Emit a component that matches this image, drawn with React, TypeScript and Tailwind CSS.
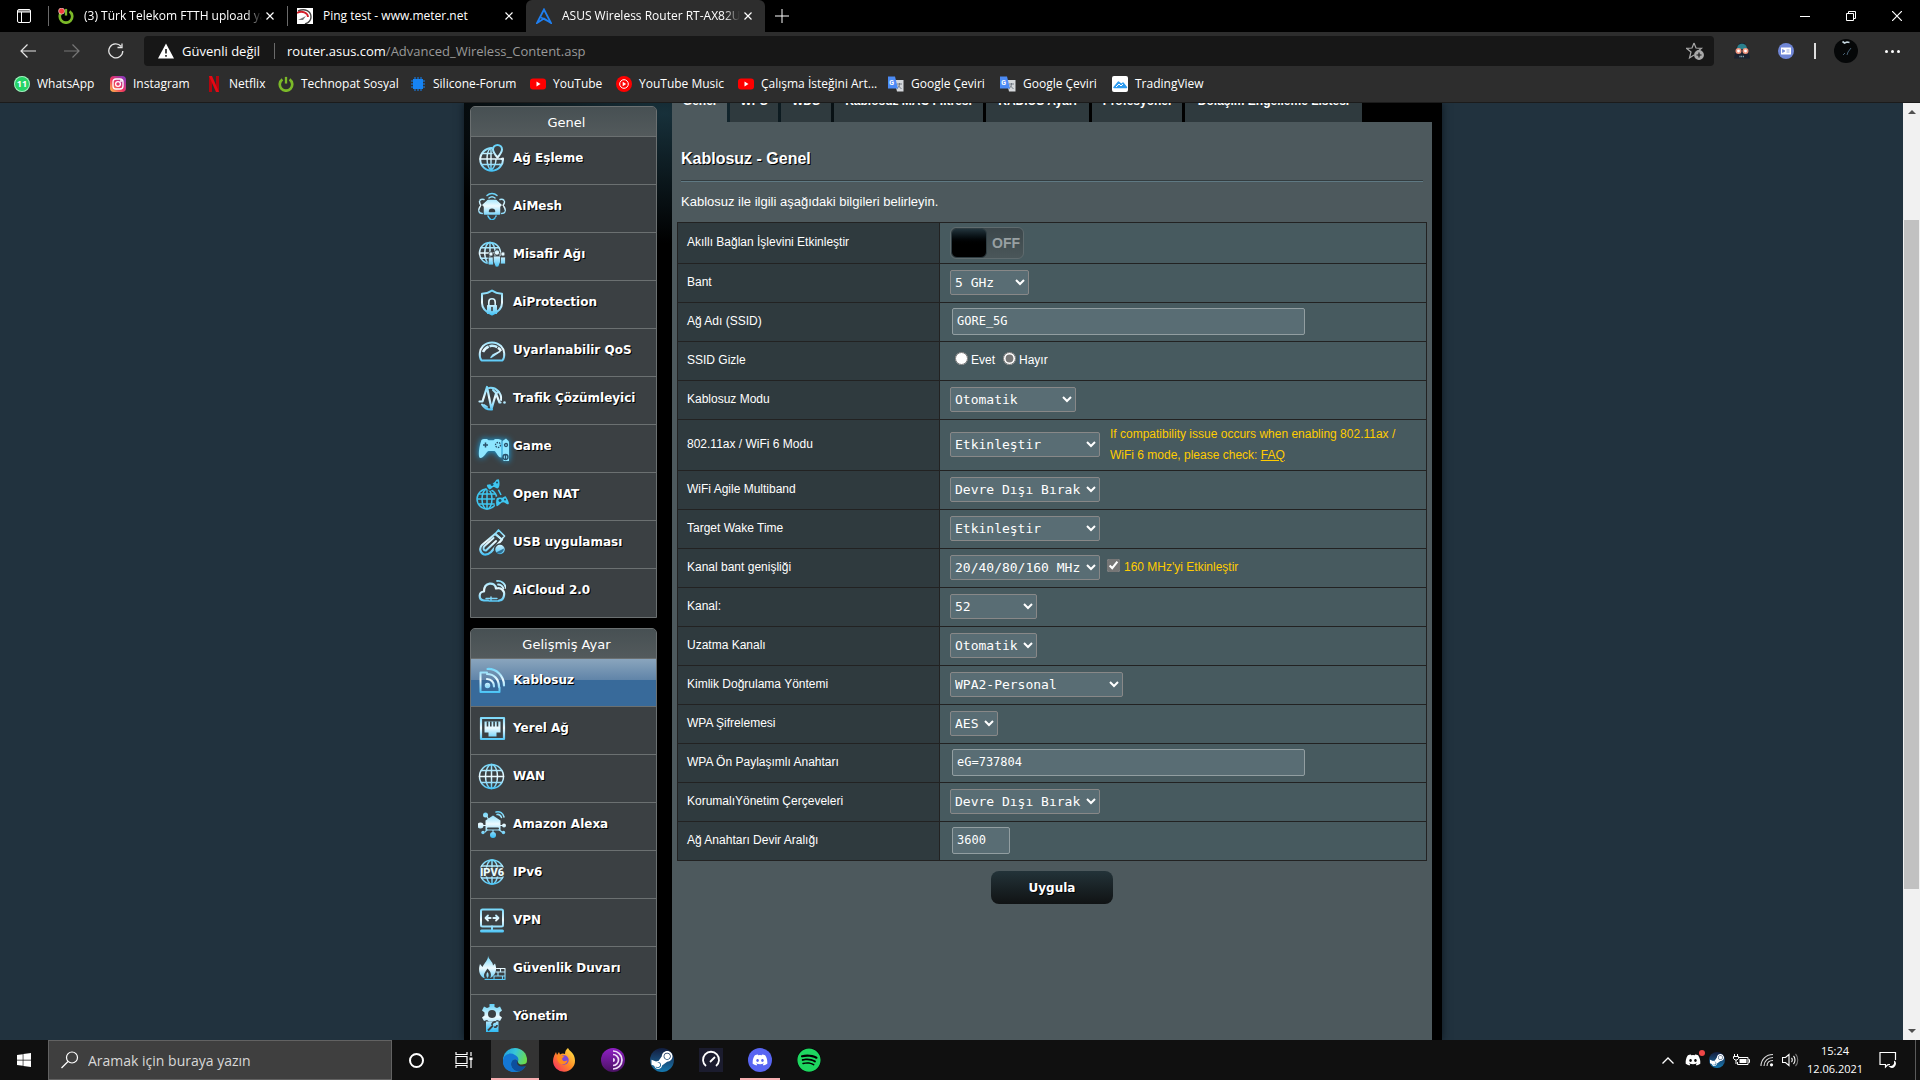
import React from "react";
import { FaDiscord, FaSpotify, FaSteamSymbol, FaWindows } from "react-icons/fa";

const UI = "font-['Open_Sans','Noto_Sans',sans-serif]";
const ICE = "url(#ice)";

/* ---------- sidebar icons (28 x 28 grid) ---------- */

function Ico({ children }: { children: React.ReactNode }) {
  return (
    <svg viewBox="0 0 28 28" className="size-7 shrink-0" fill="none" stroke={ICE} strokeWidth="1.5" strokeLinecap="round" strokeLinejoin="round" aria-hidden="true">
      {children}
    </svg>
  );
}

const Globe = ({ cx = 14, cy = 14, r = 12 }: { cx?: number; cy?: number; r?: number }) => (
  <g>
    <circle cx={cx} cy={cy} r={r} />
    <ellipse cx={cx} cy={cy} rx={r * 0.5} ry={r} />
    <path d={`M${cx} ${cy - r}v${2 * r}M${cx - r} ${cy + 0.01}h${2 * r}M${cx - r * 0.86} ${cy - r * 0.5}h${r * 1.72}M${cx - r * 0.86} ${cy + r * 0.51}h${r * 1.72}`} />
  </g>
);

const MapIcon = () => (
  <Ico>
    <path d="M14 4A11.400 11.400 0 1 0 25 14.500" strokeWidth="2" />
    <path d="M12 4.500C8 9 8 21 12.500 26M13 4v22M18 15c0 5-1.500 8-4.500 11M2 15h21M4 9.500h10M4 20.500h18" strokeWidth="1.400" />
    <path d="M19.500 13.500c-3-3.500-4.500-5.500-4.500-8a4.500 4.500 0 0 1 9 0c0 2.500-1.500 4.500-4.500 8z" strokeWidth="2" fill="#3b4043" />
    <circle cx="22" cy="20.500" r="1.100" fill={ICE} stroke="none" />
    <circle cx="24" cy="15" r="1.300" fill={ICE} stroke="none" />
  </Ico>
);
const MeshIcon = () => (
  <Ico>
    <path d="M9 3.500a7 7 0 0 1 10 0M11 6a4.500 4.500 0 0 1 6 0" />
    <path d="M10 8.500h8l5 4.500-1.500 1.500V22h-15v-7.500L5 13z" fill={ICE} />
    <path d="M11.500 19.500a2.500 2.300 0 0 1 5 0z" fill="#3b4043" stroke="#3b4043" />
    <path d="M6 7.500C1 6.500 .500 10 3 13.500c-3 3-3.500 8 1.500 8M22 7.500c5-1 5.500 3 3 6 3 3 3.500 8-1.500 8M10 24c2 5 6 5 8 0" strokeDasharray="4 1.500" />
  </Ico>
);
const GuestIcon = () => (
  <Ico>
    <Globe cx={12} cy={13} r={10.500} />
    <g fill={ICE} stroke="#3b4043" strokeWidth="0.800">
      <circle cx="13" cy="14" r="2.200" /><circle cx="25" cy="14" r="2.200" />
      <path d="M10.500 17h5v8h-5zM22.500 17h5v7h-5z" />
      <circle cx="19" cy="12.500" r="2.700" /><path d="M15.500 16h7v6l-2 5h-3l-2-5z" />
    </g>
  </Ico>
);
const ShieldIcon = () => (
  <Ico>
    <path d="M14 2.500c3 2.300 6 3 10 3.200V15c0 5.500-3.500 9-10 11.500C7.500 24 4 20.500 4 15V5.700c4-.200 7-.900 10-3.200z" strokeWidth="2" />
    <path d="M10.800 17v-3a3.200 3.200 0 0 1 6.400 0v3" strokeWidth="1.600" />
    <rect x="9" y="17" width="10" height="9" rx=".500" fill={ICE} stroke="none" />
    <path d="M14 19.500v3" stroke="#3b4043" strokeWidth="1.600" />
  </Ico>
);
const GaugeIcon = () => (
  <Ico>
    <path d="M3.500 24.500c-3-4-2-11 1.500-14.500a13 13 0 0 1 18 0c3.500 3.500 4.500 10.500 1.500 14.500z" strokeWidth="2" />
    <path d="M5 16a10 10 0 0 1 18-1" strokeWidth="2.500" strokeDasharray="8 .800" strokeLinecap="butt" />
    <path d="M13 21.500l9-6-7 3.500z" fill={ICE} />
  </Ico>
);
const TrafficIcon = () => (
  <Ico>
    <path d="M11 4a10.500 10.500 0 0 1 12 12M4 20.500a10.500 10.500 0 0 0 10 5" strokeWidth="2" />
    <path d="M1.500 17.500h3L9 3l4.500 22L18 9.500l3.500 9h1" strokeWidth="2.200" />
    <path d="M15 6l3 3 3-1M6 21l3 2" strokeWidth="2" />
    <circle cx="26.500" cy="18.500" r="1.300" fill={ICE} stroke="none" />
  </Ico>
);
const GameIcon = () => (
  <svg viewBox="0 0 32 28" className="mt-2 h-7 w-8 shrink-0 drop-shadow-[0_0_3px_#16a5e8]" aria-hidden="true">
    <path d="M3 5.500Q3 3 6 3h3l1.500 1.200h5L17 3h3.500l3 1v17.500c-3 1-5-5.500-7-6.500h-6C8 16 6 22 2.500 22-.500 22 1 11 3 5.500z" fill="#8de6ff" />
    <path d="M24.500 5 28 2.500 31 5.500V25h-5.500l-1-5z" fill="#8de6ff" />
    <g stroke="#29506a" strokeWidth="1.500"><path d="M5 9h5M7.500 6.500v5" /></g>
    <g fill="none" stroke="#29506a" strokeWidth="1.300">
      <circle cx="20" cy="9" r="2.500" strokeDasharray="1.500 1" /><circle cx="28" cy="9" r="1.500" /><circle cx="27.500" cy="21" r="2.500" /><path d="M27.500 18.500v5" />
    </g>
  </svg>
);
const NatIcon = () => (
  <svg viewBox="0 0 34 34" className="-ml-0.5 size-[34px] shrink-0" fill="none" stroke="#3fc6f0" strokeWidth="1.500" aria-hidden="true">
    <circle cx="11" cy="22" r="10" /><ellipse cx="11" cy="22" rx="5" ry="10" /><path d="M11 12v20M1 22h20M2.500 17h17M2.500 27h17" />
    <path d="M22 12l3 6" />
    <path d="M11 7c4 0 7-1 9-5 2-1 4-1 4 2 1 5-1 9-3 8-2 0-2-2-4-1-2 2-4 3-5 1-1-1-3-4-1-5zM20 21c2-2 4-1 6-1 2-1 4-3 5 0 2 3 4 8 1 8-2 0-3-2-5-2s-4 4-6 4-2-6-1-9z" fill="#3fc6f0" stroke="#3b4043" />
    <path d="M16 6v3M14.500 7.500h3M24 22v3M22.500 23.500h3" stroke="#1e4a5c" />
    <circle cx="21" cy="5.500" r="1" fill="#1e4a5c" stroke="none" /><circle cx="29" cy="22.500" r="1" fill="#1e4a5c" stroke="none" />
  </svg>
);
const UsbIcon = () => (
  <Ico>
    <path d="M17 6 4 17c-3 3-2 8 2 9.500 3 .500 5-.500 7-2.500L24 11.500z" strokeWidth="2.200" />
    <path d="M15.500 10 6.500 18c-2 2-1 5 1.500 4.500L18 13" strokeWidth="2" />
    <path d="M17.500 5.500l3-3.500 6 6-3 3.500z" strokeWidth="1.700" />
    <circle cx="22" cy="21.500" r="5.500" fill={ICE} stroke="#3b4043" /><path d="M18 24.500a5 5 0 0 0 8-4z" fill="#2f6f93" stroke="none" />
  </Ico>
);
const CloudIcon = () => (
  <Ico>
    <path d="M10 24.500H6c-6-.500-5.500-9 0-9C6 6 17 5 18 12.500c5-1.500 9 2 8 7-.500 3-2 5-5 5" strokeWidth="2.200" />
    <path d="M8 22.500h11M11 25h10M13 21v3" strokeWidth="1.400" />
    <path d="M19 5c4-.500 8 2 9 7M20 8.500c2.500 0 4.500 1.500 5.500 4" strokeWidth="1.800" />
  </Ico>
);
const WirelessIcon = () => (
  <Ico>
    <path d="M9 6.500H2.500v19.500h19V21.500" strokeWidth="2" />
    <circle cx="9.500" cy="19.500" r="2" fill={ICE} />
    <path d="M9 13a7 7 0 0 1 7 7.500M9 8c7 0 12 5 12 13M9.500 3C18 2.500 26 9.500 26 19.500" strokeWidth="2.200" />
  </Ico>
);
const LanIcon = () => (
  <Ico>
    <path d="M3 4h23v21H3z" strokeWidth="2.200" />
    <path d="M6.500 7.500h16v11h-4v4h-8v-4h-4z" fill={ICE} stroke="none" />
    <path d="M9.500 7.500v5M12.800 7.500v5M16.100 7.500v5M19.500 7.500v5" stroke="#3b4043" strokeLinecap="butt" strokeWidth="1.600" />
  </Ico>
);
const WanIcon = () => <Ico><Globe cx={13.500} cy={14.500} r={12} /></Ico>;
const AlexaIcon = () => (
  <Ico>
    <g transform="translate(1 0)">
      <path d="M2 15.500h23M6 22l4-4M14 24v-5M23 22l-4-3M7 5l3 5" strokeWidth="1.200" />
      <path d="M14 5.500l7.500 5V20.500h-15v-10z" fill={ICE} stroke="none" />
      <path d="M9 18.500h10" stroke="#3b4043" strokeWidth="2" />
      <circle cx="1.500" cy="15.500" r="3" fill={ICE} stroke="none" /><circle cx="25" cy="15.500" r="2" fill={ICE} stroke="none" />
      <circle cx="14" cy="25" r="3" fill={ICE} stroke="none" /><circle cx="6.500" cy="5" r="2.500" fill={ICE} stroke="none" />
      <circle cx="4" cy="22.500" r="1.700" fill={ICE} stroke="none" /><circle cx="24.500" cy="22.500" r="1.700" fill={ICE} stroke="none" />
      <path d="M17 2c4-1 7 1 8 5M18 4.500c2-.500 3.500.500 4.500 3" />
    </g>
  </Ico>
);
const Ipv6Icon = () => (
  <Ico>
    <Globe />
    <path d="M0 9.500h28v9H0z" fill="#3b4043" stroke="none" />
    <text x="14" y="18" textAnchor="middle" fontSize="11" fontWeight="900" fontFamily="Roboto, sans-serif" fill="#e8fbff" stroke="none">IPV6</text>
  </Ico>
);
const VpnIcon = () => (
  <Ico>
    <rect x="3" y="3.500" width="22" height="17" rx="1.500" strokeWidth="2" />
    <path d="M3.500 25h21" strokeWidth="3" /><path d="M14 20.500v4" strokeWidth="2" />
    <path d="M8 12h4.500M15.500 12H20" strokeWidth="2.200" /><path d="M10 9.500L7.500 12l2.500 2.500M18 9.500l2.500 2.500-2.500 2.500" strokeWidth="1.800" />
  </Ico>
);
const FireIcon = () => (
  <Ico>
    <path d="M10 1.500c.500 4 5 6 5 10l2-2c2 5 1 9-1 11.500-3 4.500-11 5-13.500 0C0 16 1.500 12 2 10l2.500 3C6 9 10.500 6 10 1.500z" fill={ICE} stroke="none" />
    <path d="M9.500 14.500c4 4 4 6.500 2.500 10h-5c-2-3.500-1-5 2.500-10z" fill="#3b4043" stroke="none" />
    <path d="M9.500 18c1.500 2 1.500 4.500 0 6-1.500-1.500-1.500-4 0-6z" fill={ICE} stroke="none" />
    <path d="M18.500 14.500H27v11H7M18 18h9M16.500 22H27M22.500 14.500V18M20 18v4M24.500 22v3.500M16 22v3.500" strokeWidth="1.100" />
  </Ico>
);
const AdminIcon = () => (
  <svg viewBox="0 0 28 30" className="mt-1 h-[30px] w-7 shrink-0" aria-hidden="true">
    <path d="M11.500 1h5v3l2.500 1 3-1.500 2 4-2.500 2v3l2.500 2-2 3.500-3-1-2 1.500h-6L9 17l-3 1-2-3.500 2.500-2v-3L4 7.500l2-4L9 5l2.500-1z" fill={ICE} />
    <circle cx="14" cy="11" r="4" fill="#3b4043" />
    <path d="M8 18.500h12.500V29H8z" fill={ICE} />
    <path d="M10 27.500l5-5M14 22a3 3 0 0 1 4-3M16 24c2 .500 3-.500 3-2" stroke="#3b4043" strokeWidth="1.800" fill="none" />
  </svg>
);

/* ---------- browser chrome ---------- */

const PowerLogo = ({ dot }: { dot?: boolean }) => (
  <svg viewBox="0 0 18 18" className="size-4 shrink-0" aria-hidden="true">
    <path d="M5 3.800a7 7 0 1 0 8 0" fill="none" stroke="#7bb928" strokeWidth="3" />
    <path d="M9 1v7.500" stroke="#7bb928" strokeWidth="2.600" />
    {dot && <circle cx="4" cy="3.500" r="3.400" fill="#f13b3b" stroke="#fff" strokeWidth=".600" />}
  </svg>
);
const CloseX = ({ label }: { label: string }) => (
  <button aria-label={label} className="flex size-4 shrink-0 items-center justify-center">
    <svg viewBox="0 0 8 8" className="size-2" stroke="#fff" strokeWidth="1.200" aria-hidden="true"><path d="M.500.500l7 7M7.500.500l-7 7" /></svg>
  </button>
);

function TabStrip() {
  return (
    <div className={`flex h-8 shrink-0 items-center bg-black text-[12px] leading-4 text-white ${UI}`}>
      <button aria-label="Sekme eylemleri" className="flex w-12 justify-center">
        <svg viewBox="0 0 14 14" className="size-3.5" fill="none" stroke="#fff" aria-hidden="true"><rect x=".500" y=".500" width="13" height="13" rx="1.500" /><path d="M1 2h12M1 3h12M4.500 3v10" /></svg>
      </button>
      <div className="flex h-8 w-[239px] items-center">
        <span className="mr-[9px] h-5 w-px bg-[#6a6a6a]" />
        <PowerLogo dot />
        <span className="ml-2.5 w-[178px] overflow-hidden whitespace-nowrap [mask-image:linear-gradient(to_right,#000_162px,transparent)]">(3) Türk Telekom FTTH upload yavaş</span>
        <CloseX label="Sekmeyi kapat" />
      </div>
      <div className="flex h-8 w-[239px] items-center">
        <span className="mr-[9px] h-5 w-px bg-[#6a6a6a]" />
        <svg viewBox="0 0 16 16" className="size-4 shrink-0" aria-hidden="true"><path d="M0 0h16v16H0z" fill="#fff" /><path d="M1 3c7-3 13 0 13 6 0 4-3 6-6 7" fill="none" stroke="#444" strokeWidth="1.400" /><path d="M0 5c5-3 11 0 11 4" fill="none" stroke="#d3202a" strokeWidth="1.800" /><path d="M1 12l8-4-3 4z" fill="#777" /></svg>
        <span className="ml-2.5 w-[178px] overflow-hidden whitespace-nowrap">Ping test - www.meter.net</span>
        <CloseX label="Sekmeyi kapat" />
      </div>
      <div className="flex h-8 w-[239px] items-center rounded-t-md bg-[#2d2d2d] pl-2.5">
        <svg viewBox="0 0 16 16" className="size-4 shrink-0" fill="none" stroke="#1f7ff0" strokeWidth="1.800" aria-hidden="true"><path d="M8 1.500 1 15l7-4.500L15 15z M5 9.500l9.500 5" /></svg>
        <span className="ml-2.5 w-[178px] overflow-hidden whitespace-nowrap [mask-image:linear-gradient(to_right,#000_162px,transparent)]">ASUS Wireless Router RT-AX82U - Genel</span>
        <CloseX label="Sekmeyi kapat" />
      </div>
      <button aria-label="Yeni sekme" className="ml-2.5">
        <svg viewBox="0 0 14 14" className="size-3.5" stroke="#fff" aria-hidden="true"><path d="M7 0v14M0 7h14" /></svg>
      </button>
      <div className="ml-auto flex h-7 items-center">
        <button aria-label="Simge durumuna küçült" className="flex w-[46px] justify-center"><svg viewBox="0 0 10 10" className="size-2.5" stroke="#fff" aria-hidden="true"><path d="M0 5.500h10" /></svg></button>
        <button aria-label="Önceki boyut" className="flex w-[46px] justify-center"><svg viewBox="0 0 10 10" className="size-2.5" fill="none" stroke="#fff" aria-hidden="true"><path d="M.500 2.500h7v7h-7zM2.500 2V.500h7v7H8" /></svg></button>
        <button aria-label="Kapat" className="flex w-[46px] justify-center"><svg viewBox="0 0 10 10" className="size-2.5" stroke="#fff" strokeWidth="1.200" aria-hidden="true"><path d="M0 0l10 10M10 0 0 10" /></svg></button>
      </div>
    </div>
  );
}

function Toolbar() {
  return (
    <div className={`flex h-[38px] shrink-0 items-center bg-[#2d2d2d] pl-5 text-[13px] leading-5 text-white ${UI}`}>
      <button aria-label="Geri" className="w-11"><svg viewBox="0 0 16 16" className="size-4" fill="none" stroke="#e4e4e4" strokeWidth="1.200" aria-hidden="true"><path d="M16 8H1M7.500 1.500 1 8l6.500 6.500" /></svg></button>
      <button aria-label="İleri" className="w-11"><svg viewBox="0 0 16 16" className="size-4" fill="none" stroke="#777" strokeWidth="1.200" aria-hidden="true"><path d="M0 8h15M8.500 1.500 15 8l-6.500 6.500" /></svg></button>
      <button aria-label="Yenile" className="w-9"><svg viewBox="0 0 16 16" className="size-4" fill="none" stroke="#e4e4e4" strokeWidth="1.300" aria-hidden="true"><path d="M14.800 8A7 7 0 1 1 13 3.200M14 .500v4H9.500" /></svg></button>
      <div className="flex h-[30px] flex-1 items-center rounded bg-[#171717] pl-3.5 pr-2.5">
        <svg viewBox="0 0 16 16" className="size-4" aria-hidden="true"><path d="M8 .500 16 15.500H0z" fill="#fff" /><path d="M8 6v4.500M8 12v1.700" stroke="#171717" strokeWidth="1.600" /></svg>
        <span className="ml-2 w-[92px] whitespace-nowrap">Güvenli değil</span>
        <span className="h-4 w-px bg-[#6a6a6a]" />
        <span className="ml-3 whitespace-nowrap text-[#999]"><span className="text-white">router.asus.com</span>/Advanced_Wireless_Content.asp</span>
        <button aria-label="Sık kullanılanlara ekle" className="ml-auto"><svg viewBox="0 0 18 18" className="size-[18px]" fill="none" stroke="#aaa" strokeWidth="1.200" aria-hidden="true"><path d="M8 1l2 5 5.500.300-4.300 3.500M8 1 6 6l-5.500.300L5 10l-1.500 6 4.500-3" /><circle cx="13" cy="13" r="4.300" fill="#aaa" /><path d="M13 10.500v5M10.500 13h5" stroke="#171717" /></svg></button>
      </div>
      <div className="ml-5 flex items-center">
        <svg viewBox="0 0 16 16" className="size-4" aria-hidden="true"><path d="M0 15.500 2 5l3-3V0h6v2l3 3 2 10.500z" fill="#1b2230" /><path d="M3 6c0-7 10-7 10 0z" fill="#2b7f8c" /><circle cx="4.500" cy="8" r="3" fill="#f0937c" /><circle cx="11.500" cy="8" r="3" fill="#f0937c" /><circle cx="4.500" cy="8" r="1.400" fill="#fff" /><circle cx="11.500" cy="8" r="1.400" fill="#fff" /><path d="M5.500 13.500h5" stroke="#8fb3bd" strokeWidth="1.500" strokeDasharray="1 .700" /></svg>
        <svg viewBox="0 0 16 16" className="ml-7 size-4" aria-hidden="true"><circle cx="8" cy="8" r="8" fill="#6f86d6" /><path d="M3 4.500h10v7H3z" fill="#fff" /><path d="M4.500 6.500v3l2.500-1.500zM8.500 7h3M8.500 9h3" fill="#6f86d6" stroke="#6f86d6" strokeWidth=".700" /></svg>
        <span className="ml-5 h-4 w-0.5 bg-[#ddd]" />
        <svg viewBox="0 0 24 24" className="ml-[18px] size-6" aria-hidden="true"><circle cx="12" cy="12" r="12" fill="#050708" /><path d="M8.500 2.500l2 1.500 2.500-1 2.500.500" stroke="#c4d5de" strokeWidth="1.600" fill="none" /><path d="M17 9l-3 4M11 14l-2 2M14 13l-1 3" stroke="#4d6a80" strokeWidth=".900" fill="none" /></svg>
        <button aria-label="Ayarlar ve diğer" className="ml-[27px] mr-5 flex gap-[3px]"><i className="size-[3px] rounded-full bg-white" /><i className="size-[3px] rounded-full bg-white" /><i className="size-[3px] rounded-full bg-white" /></button>
      </div>
    </div>
  );
}

const Yt = () => <svg viewBox="0 0 16 16" className="size-4" aria-hidden="true"><rect y="2.500" width="16" height="11" rx="3" fill="#f00" /><path d="M6.500 5.500v5l4-2.500z" fill="#fff" /></svg>;
const GTranslate = () => (
  <svg viewBox="0 0 16 16" className="size-4" aria-hidden="true"><path d="M6 4h9.500v11.500H9z" fill="#d5d8dc" /><path d="M9 8h5M11.500 7v1c0 2-1 3.500-2.500 4.500M10 9.500l3.500 3.500" stroke="#69727c" strokeWidth=".900" fill="none" /><path d="M0 .500h7l3 12H0z" fill="#4c8bf5" /><text x="1.300" y="8.500" fontSize="7" fontWeight="700" fill="#fff" fontFamily="Roboto, sans-serif">G</text></svg>
);

const bookmarks: { w: string; label: string; icon: React.ReactNode }[] = [
  { w: "w-24", label: "WhatsApp", icon: <span className="flex size-4 items-center justify-center rounded-full bg-[#25d366] text-[9px] font-bold leading-4 text-white ring-1 ring-inset ring-white/60">11</span> },
  { w: "w-24", label: "Instagram", icon: <svg viewBox="0 0 16 16" className="size-4" fill="none" stroke="#fff" strokeWidth="1.300" aria-hidden="true"><rect width="16" height="16" rx="4" fill="url(#insta)" stroke="none" /><rect x="3" y="3" width="10" height="10" rx="3" /><circle cx="8" cy="8" r="2.400" /><circle cx="11" cy="5" r=".400" /></svg> },
  { w: "w-[72px]", label: "Netflix", icon: <svg viewBox="0 0 10 16" className="h-4 w-3.5" aria-hidden="true"><path d="M0 0h3v16H0zM7 0h3v16H7z" fill="#b1060f" /><path d="M0 0h3l7 16H7z" fill="#e50914" /></svg> },
  { w: "w-[132px]", label: "Technopat Sosyal", icon: <PowerLogo /> },
  { w: "w-[120px]", label: "Silicone-Forum", icon: <svg viewBox="0 0 16 16" className="size-4" aria-hidden="true"><rect x="3" y="3" width="10" height="10" fill="#1683f3" /><path d="M5 1v14M8 1v14M11 1v14M1 5h14M1 8h14M1 11h14" stroke="#1683f3" strokeWidth="1" /></svg> },
  { w: "w-[86px]", label: "YouTube", icon: <Yt /> },
  { w: "w-[122px]", label: "YouTube Music", icon: <svg viewBox="0 0 16 16" className="size-4" aria-hidden="true"><circle cx="8" cy="8" r="8" fill="#f00" /><circle cx="8" cy="8" r="4.300" fill="none" stroke="#fff" /><path d="M6.700 5.800v4.400l3.500-2.200z" fill="#fff" /></svg> },
  { w: "w-[150px]", label: "Çalışma İsteğini Art...", icon: <Yt /> },
  { w: "w-28", label: "Google Çeviri", icon: <GTranslate /> },
  { w: "w-28", label: "Google Çeviri", icon: <GTranslate /> },
  { w: "w-28", label: "TradingView", icon: <svg viewBox="0 0 16 16" className="size-4" aria-hidden="true"><rect width="16" height="16" rx="2" fill="#fff" /><path d="M2 11.500 6.500 6l3 2.500 1.500-1.500 3.500 4.500z" fill="#2d9bf0" stroke="#2d9bf0" strokeWidth="1.500" strokeLinejoin="round" /><path d="M4 11l3-3 2 2 2-2" stroke="#fff" fill="none" /></svg> },
];

function Bookmarks() {
  return (
    <nav className={`flex h-[33px] shrink-0 items-center border-b border-[#1b1b1b] bg-[#2d2d2d] pb-1 pl-3.5 text-[12px] leading-4 text-white ${UI}`}>
      {bookmarks.map((b, i) => (
        <a key={i} href="#" className={`${b.w} flex shrink-0 items-center gap-[7px] whitespace-nowrap`}>
          <span className="flex w-4 shrink-0 justify-center">{b.icon}</span>
          {b.label}
        </a>
      ))}
    </nav>
  );
}

/* ---------- router page ---------- */

type Item = { label: string; icon: React.ReactNode; active?: boolean };
const general: Item[] = [
  { label: "Ağ Eşleme", icon: <MapIcon /> },
  { label: "AiMesh", icon: <MeshIcon /> },
  { label: "Misafir Ağı", icon: <GuestIcon /> },
  { label: "AiProtection", icon: <ShieldIcon /> },
  { label: "Uyarlanabilir QoS", icon: <GaugeIcon /> },
  { label: "Trafik Çözümleyici", icon: <TrafficIcon /> },
  { label: "Game", icon: <GameIcon /> },
  { label: "Open NAT", icon: <NatIcon /> },
  { label: "USB uygulaması", icon: <UsbIcon /> },
  { label: "AiCloud 2.0", icon: <CloudIcon /> },
];
const advanced: Item[] = [
  { label: "Kablosuz", icon: <WirelessIcon />, active: true },
  { label: "Yerel Ağ", icon: <LanIcon /> },
  { label: "WAN", icon: <WanIcon /> },
  { label: "Amazon Alexa", icon: <AlexaIcon /> },
  { label: "IPv6", icon: <Ipv6Icon /> },
  { label: "VPN", icon: <VpnIcon /> },
  { label: "Güvenlik Duvarı", icon: <FireIcon /> },
  { label: "Yönetim", icon: <AdminIcon /> },
];

function Menu({ title, items }: { title: string; items: Item[] }) {
  return (
    <nav className="shrink-0 overflow-hidden rounded-t-[5px] border border-[#6b7071] bg-[#3b4043] pb-px font-['DejaVu_Sans',sans-serif] text-white">
      <h2 className="h-[29px] bg-linear-to-b from-[#475053] to-[#535a5c] pl-1.5 text-center text-[13px] leading-8">{title}</h2>
      {items.map((it) => (
        <a
          key={it.label}
          href="#"
          className={`flex h-12 items-center border-t border-[#6b7071] pl-[7px] ${it.active ? "bg-linear-to-b from-[#8aa5bd] from-0% via-[#6084a8] via-45% to-[#386a9a] to-45%" : ""}`}
        >
          <span className="flex w-[35px] shrink-0 items-center pb-1.5">{it.icon}</span>
          <span className="whitespace-nowrap pb-1.5 text-[12px] font-bold leading-5 [text-shadow:1px_1px_0_#000]">{it.label}</span>
        </a>
      ))}
    </nav>
  );
}

function Select({ id, w, value }: { id: string; w: string; value: string }) {
  return (
    <select id={id} defaultValue={value} className={`${w} block h-[25px] rounded-[2px] border border-[#888] bg-[#596d74] font-['DejaVu_Sans_Mono',monospace] text-[13px] text-white`}>
      <option>{value}</option>
    </select>
  );
}
function Field({ id, w, value }: { id: string; w: string; value: string }) {
  return <input id={id} type="text" defaultValue={value} className={`${w} ml-0.5 block h-[27px] rounded-[2px] border border-[#929ea1] bg-[#596d74] px-1 font-['DejaVu_Sans_Mono',monospace] text-[12px] text-white`} />;
}

const tabs = [
  { label: "Genel", w: "w-[55px]", active: true },
  { label: "WPS", w: "w-12" },
  { label: "WDS", w: "w-[50px]" },
  { label: "Kablosuz MAC Filtresi", w: "w-[149px]" },
  { label: "RADIUS Ayarı", w: "w-[103px]" },
  { label: "Profesyonel", w: "w-[90px]" },
  { label: "Dolaşım Engelleme Listesi", w: "w-[177px]" },
];

const rows: { id: string; label: string; h: string; control: React.ReactNode }[] = [
  {
    id: "smart", label: "Akıllı Bağlan İşlevini Etkinleştir", h: "h-[41px]",
    control: (
      <button id="smart" role="switch" aria-checked="false" className="mt-0.5 flex h-8 w-[74px] items-center overflow-hidden rounded-md border border-[#5f6b6e] bg-linear-to-b from-[#3c474b] to-[#4a5659] font-['Liberation_Sans',sans-serif] text-[14px] font-bold text-[#98a0a2]">
        <span className="h-full w-9 rounded-md border border-[#2f3d42] bg-linear-to-b from-[#22343c] to-black to-60%" />
        <span className="pl-[5px]">OFF</span>
      </button>
    ),
  },
  { id: "band", label: "Bant", h: "h-[39px]", control: <Select id="band" w="w-[79px]" value="5 GHz" /> },
  { id: "ssid", label: "Ağ Adı (SSID)", h: "h-[39px]", control: <Field id="ssid" w="w-[353px]" value="GORE_5G" /> },
  {
    id: "hide-no", label: "SSID Gizle", h: "h-[39px]",
    control: (
      <span className="flex items-center pl-[5px]">
        <input type="radio" name="hide" id="hide-yes" className="mb-1 size-[13px] accent-[#767676]" /><label htmlFor="hide-yes" className="ml-[3px] mr-2">Evet</label>
        <input type="radio" name="hide" id="hide-no" defaultChecked className="mb-1 size-[13px] accent-[#767676]" /><label htmlFor="hide-no" className="ml-[3px]">Hayır</label>
      </span>
    ),
  },
  { id: "mode", label: "Kablosuz Modu", h: "h-[39px]", control: <Select id="mode" w="w-[126px]" value="Otomatik" /> },
  {
    id: "ax", label: "802.11ax / WiFi 6 Modu", h: "h-[51px]",
    control: (
      <span className="flex items-center">
        <Select id="ax" w="w-[150px]" value="Etkinleştir" />
        <span className="ml-2.5 w-[300px] pt-0.5 leading-[21px] text-[#fc0]">If compatibility issue occurs when enabling 802.11ax / WiFi 6 mode, please check: <a href="#" className="underline">FAQ</a></span>
      </span>
    ),
  },
  { id: "agile", label: "WiFi Agile Multiband", h: "h-[39px]", control: <Select id="agile" w="w-[150px]" value="Devre Dışı Bırak" /> },
  { id: "twt", label: "Target Wake Time", h: "h-[39px]", control: <Select id="twt" w="w-[150px]" value="Etkinleştir" /> },
  {
    id: "bw", label: "Kanal bant genişliği", h: "h-[39px]",
    control: (
      <span className="flex items-center">
        <Select id="bw" w="w-[150px]" value="20/40/80/160 MHz" />
        <input type="checkbox" id="bw160" defaultChecked className="mb-1 ml-[7px] size-[13px] accent-[#767676]" />
        <label htmlFor="bw160" className="ml-1 text-[#fc0]">160 MHz'yi Etkinleştir</label>
      </span>
    ),
  },
  { id: "ch", label: "Kanal:", h: "h-[39px]", control: <Select id="ch" w="w-[87px]" value="52" /> },
  { id: "ext", label: "Uzatma Kanalı", h: "h-[39px]", control: <Select id="ext" w="w-[87px]" value="Otomatik" /> },
  { id: "auth", label: "Kimlik Doğrulama Yöntemi", h: "h-[39px]", control: <Select id="auth" w="w-[173px]" value="WPA2-Personal" /> },
  { id: "enc", label: "WPA Şifrelemesi", h: "h-[39px]", control: <Select id="enc" w="w-12" value="AES" /> },
  { id: "psk", label: "WPA Ön Paylaşımlı Anahtarı", h: "h-[39px]", control: <Field id="psk" w="w-[353px]" value="eG=737804" /> },
  { id: "pmf", label: "KorumalıYönetim Çerçeveleri", h: "h-[39px]", control: <Select id="pmf" w="w-[150px]" value="Devre Dışı Bırak" /> },
  { id: "rekey", label: "Ağ Anahtarı Devir Aralığı", h: "h-[39px]", control: <Field id="rekey" w="w-[58px]" value="3600" /> },
];

function RouterPage() {
  return (
    <div className="flex flex-1 justify-center overflow-hidden bg-[#21323e] pl-[3px]">
      <div className="flex w-[978px] items-stretch bg-black bg-[radial-gradient(ellipse_260px_130px_at_200px_10px,#17303a,#000)] bg-[length:370px_140px] bg-no-repeat pl-1.5 pr-2.5 shadow-[0_0_8px_#0d1820]">
        <aside className="flex w-[187px] shrink-0 flex-col gap-2.5 pt-[3px]">
          <Menu title="Genel" items={general} />
          <Menu title="Gelişmiş Ayar" items={advanced} />
        </aside>
        <main className="ml-[15px] flex min-w-0 flex-1 flex-col font-['Liberation_Sans',sans-serif] text-[12px] text-white">
          <div role="tablist" className="-mt-[21px] flex gap-[3px]">
            {tabs.map((t) => (
              <button key={t.label} role="tab" aria-selected={!!t.active} className={`${t.w} h-10 whitespace-nowrap pb-0.5 text-[12px] font-bold leading-5 ${t.active ? "bg-[#4d595d]" : "bg-[#2f3a3e]"}`}>{t.label}</button>
            ))}
          </div>
          <div className="flex-1 bg-[#4d595d] px-[5px]">
            <div className="px-1">
              <h1 className="pb-[11px] pt-[27px] text-[16px] font-bold leading-5 [text-shadow:1px_1px_0_#000]">Kablosuz - Genel</h1>
              <div className="border-b border-t border-b-[#5f7983] border-t-[#343d40]" />
              <p className="pb-3 pt-3 text-[13px] leading-4">Kablosuz ile ilgili aşağıdaki bilgileri belirleyin.</p>
            </div>
            <table className="w-full table-fixed border-collapse border border-[#222]">
              <tbody>
                {rows.map((r) => (
                  <tr key={r.id} className={r.h}>
                    <th scope="row" className="w-[262px] border border-[#222] bg-[#2f3a3e] p-0 pb-0.5 pl-[9px] text-left font-normal"><label htmlFor={r.id}>{r.label}</label></th>
                    <td className="border border-[#222] bg-[#475a5f] p-0 pb-0.5 pl-2.5">{r.control}</td>
                  </tr>
                ))}
              </tbody>
            </table>
            <div className="flex justify-center pt-2.5">
              <button className="h-[33px] w-[122px] rounded-lg bg-linear-to-b from-[#233339] to-[#101314] font-['DejaVu_Sans',sans-serif] text-[12px] font-bold [text-shadow:1px_1px_0_#000]">Uygula</button>
            </div>
          </div>
        </main>
      </div>
    </div>
  );
}

function ScrollBar() {
  return (
    <div className="flex w-[17px] shrink-0 flex-col items-center bg-[#f1f1f1]">
      <span className="mt-[7px] border-x-4 border-b-4 border-x-transparent border-b-[#505050]" />
      <span className="mt-[106px] h-[669px] w-[15px] bg-[#c1c1c1]" />
      <span className="mb-[7px] mt-auto border-x-4 border-t-4 border-x-transparent border-t-[#505050]" />
    </div>
  );
}

/* ---------- taskbar ---------- */

const Cell = ({ label, w = "w-[49px]", look = "border-transparent", children }: { label: string; w?: string; look?: string; children: React.ReactNode }) => (
  <button aria-label={label} className={`relative flex h-10 items-center justify-center border-b-2 pt-0.5 ${w} ${look}`}>{children}</button>
);

const SteamDisc = ({ size }: { size: string }) => (
  <span className={`${size} flex items-center justify-center overflow-hidden rounded-full bg-linear-to-b from-[#111d3e] to-[#1379b0] text-white`}><FaSteamSymbol className="size-full" /></span>
);

function Taskbar() {
  return (
    <footer className={`flex h-10 shrink-0 items-center bg-[#101010] text-white ${UI}`}>
      <button aria-label="Başlat" className="flex w-12 justify-center"><FaWindows className="size-4" /></button>
      <label className="flex h-10 w-[344px] items-center border border-[#626262] bg-[#3f3f3f] pl-3">
        <svg viewBox="0 0 18 18" className="size-[18px]" fill="none" stroke="#fff" strokeWidth="1.200" aria-hidden="true"><circle cx="11" cy="6.500" r="5.500" /><path d="M7 10.500.500 17" /></svg>
        <input aria-label="Ara" placeholder="Aramak için buraya yazın" className="ml-[9px] w-64 bg-transparent text-[14px] placeholder:text-[#d8d8d8]" />
      </label>
      <Cell label="Cortana" w="w-12"><span className="size-[15px] rounded-full border-2 border-white" /></Cell>
      <Cell label="Görev görünümü" w="w-12 mr-[3px]">
        <svg viewBox="0 0 18 16" className="h-4 w-[18px]" fill="none" stroke="#fff" strokeWidth="1.200" aria-hidden="true"><path d="M1 0v2.500h11V0M1 16v-2.500h11V16M1 4.500h11v7H1zM16 0v4M16 8v8" /><path d="M14.500 5.500h3v2.500h-3z" fill="#fff" stroke="none" /></svg>
      </Cell>
      <Cell label="Microsoft Edge" w="w-12" look="border-[#f7aeb0] bg-[#333]">
        <svg viewBox="0 0 24 24" className="size-6" aria-hidden="true">
          <circle cx="12" cy="12" r="12" fill="url(#edgeA)" />
          <path d="M0 12C1 6 7 4 12 7c3 1.500 4 4 3 6-2-3-7-2-7 3 0 4 3 7 8 7.500C6 26-1 20 0 12z" fill="#1477d4" />
          <path d="M8 16c0-5 5-6 7-3-1 3 1 4.500 4 4.500 2 0 4-.500 4.500-1-2 5-6 7-8 7.200C11 23 8 20 8 16z" fill="#0d4f9e" />
          <path d="M15 12.500c-.500 2.500 1 4 4 4 2 0 4-.500 5.500-2.500l-1 3.500c-3 1.500-9 1.500-9.500-2.500z" fill="#333" />
        </svg>
      </Cell>
      <Cell label="Firefox">
        <svg viewBox="0 0 24 24" className="size-6" aria-hidden="true">
          <path d="M16 0c1 3 7 5 7 12.500A11 11 0 0 1 1 13C1 9 3 6 4 4l1 3 2-3 1 2.500c2-1.500 4-1 5-.500 0-3 1-4.500 3-6z" fill="url(#fox)" />
          <circle cx="12" cy="12" r="4.700" fill="#7a4ad8" />
          <path d="M5 8c3-1.500 6 0 7.500 1-2 0-3 1.500-2 3 1 2 4 1 5 0-.500 6-9 5.500-10 0z" fill="#ff8a1f" />
        </svg>
      </Cell>
      <Cell label="Tor Browser">
        <svg viewBox="0 0 24 24" className="size-6" fill="none" stroke="#efe0f7" strokeWidth="1.700" aria-hidden="true"><circle cx="12" cy="12" r="12" fill="url(#tor)" stroke="none" /><path d="M12 3a9 9 0 0 1 0 18M12 6.500a5.500 5.500 0 0 1 0 11" /><path d="M12 10a2 2 0 0 1 0 4z" fill="#efe0f7" stroke="none" /></svg>
      </Cell>
      <Cell label="Steam"><SteamDisc size="size-6" /></Cell>
      <Cell label="Speedtest">
        <svg viewBox="0 0 24 24" className="size-6" fill="none" stroke="#fff" strokeWidth="1.800" aria-hidden="true"><path d="M0 0h24v24H0z" fill="#1b1c2e" stroke="none" /><path d="M7 18a8 8 0 1 1 10 0M11 14l5-5" /></svg>
      </Cell>
      <Cell label="Discord">
        <span className="flex size-6 items-center justify-center rounded-full bg-[#5865f2]"><FaDiscord className="size-4" /></span>
        <span className="absolute -bottom-0.5 left-[5px] h-0.5 w-10 bg-[#f7aeb0]" />
      </Cell>
      <Cell label="Spotify"><span className="rounded-full bg-black"><FaSpotify className="size-6 text-[#1ed760]" /></span></Cell>
      <div className="ml-auto flex items-center">
        <svg viewBox="0 0 12 7" className="mr-[11px] h-[7px] w-3" fill="none" stroke="#fff" strokeWidth="1.300" aria-hidden="true"><path d="M.500 6.500 6 1l5.500 5.500" /></svg>
        <span className="relative mr-2"><FaDiscord className="size-4" /><i className="absolute -right-1 -top-0.5 size-1.5 rounded-full bg-[#f04747]" /></span>
        <SteamDisc size="size-4" />
        <svg viewBox="0 0 17 12" className="ml-2 h-3 w-[17px]" fill="none" stroke="#fff" aria-hidden="true"><path d="M6 3.500h9v7H4.500V8M15.500 5.500h1v3h-1M1.500 0v2M4.500 0v2M.500 2.500h5v2l-1.500 1.500h-2L.500 4.500zM3 6v4" /><path d="M6.500 5h7v4h-7z" fill="#fff" stroke="none" /></svg>
        <svg viewBox="0 0 14 14" className="ml-2.5 size-3.5" fill="none" stroke="#ddd" strokeWidth="1.100" aria-hidden="true"><path d="M1 13C1 6.500 6 1.500 13 1.500M4 13c0-5 4-8.500 9-8.500M7 13c0-3.500 2.500-5.500 6-5.500" /><circle cx="11.500" cy="11.800" r="1.600" fill="#fff" stroke="none" /></svg>
        <svg viewBox="0 0 17 14" className="ml-2 h-3.5 w-[17px]" fill="none" stroke="#fff" strokeWidth="1.100" aria-hidden="true"><path d="M.500 4.500h3l3.500-3v11l-3.500-3h-3zM9.500 5c1 1 1 3 0 4M11.500 3c2 2 2 6 0 8" /><path d="M13.500 1c3 3 3 9 0 12" stroke="#777" /></svg>
        <div className="ml-2 w-14 whitespace-nowrap text-center text-[11px] leading-[18px]">15:24<br />12.06.2021</div>
        <svg viewBox="0 0 18 18" className="ml-4 size-[18px]" fill="none" stroke="#fff" strokeWidth="1.200" aria-hidden="true"><path d="M11 13.500H9L6.500 16v-2.500H1v-12h15.500V9" /><path d="M15.500 10c1 3-1.500 6-4.500 5.500 3 2.500 7-2 4.500-5.500z" fill="#fff" /></svg>
        <span className="ml-[18px] mr-1 h-10 w-px bg-[#5a5a5a]" />
      </div>
    </footer>
  );
}

export default function App() {
  return (
    <div className="flex h-screen flex-col overflow-hidden bg-black">
      <svg width="0" height="0" className="absolute" aria-hidden="true">
        <defs>
          <linearGradient id="ice" gradientUnits="userSpaceOnUse" x1="0" y1="0" x2="0" y2="28"><stop offset="0" stopColor="#55cdf8" /><stop offset=".5" stopColor="#eefbff" /><stop offset="1" stopColor="#35bdf5" /></linearGradient>
          <linearGradient id="insta" x1="0" y1="1" x2="1" y2="0"><stop offset="0" stopColor="#fdc24a" /><stop offset=".45" stopColor="#ef3560" /><stop offset="1" stopColor="#7a3bd0" /></linearGradient>
          <linearGradient id="edgeA" x1="0" y1="0" x2="1" y2=".4"><stop offset="0" stopColor="#1e9be0" /><stop offset=".5" stopColor="#37c6d8" /><stop offset="1" stopColor="#6bdc4b" /></linearGradient>
          <linearGradient id="fox" x1="1" y1="0" x2="0" y2="1"><stop offset="0" stopColor="#fff14a" /><stop offset=".5" stopColor="#ff8a26" /><stop offset="1" stopColor="#f5206a" /></linearGradient>
          <linearGradient id="tor" x1="0" y1="0" x2="0" y2="1"><stop offset="0" stopColor="#8f1fc4" /><stop offset="1" stopColor="#4a1263" /></linearGradient>
        </defs>
      </svg>
      <TabStrip />
      <Toolbar />
      <Bookmarks />
      <div className="flex min-h-0 flex-1">
        <RouterPage />
        <ScrollBar />
      </div>
      <Taskbar />
    </div>
  );
}
